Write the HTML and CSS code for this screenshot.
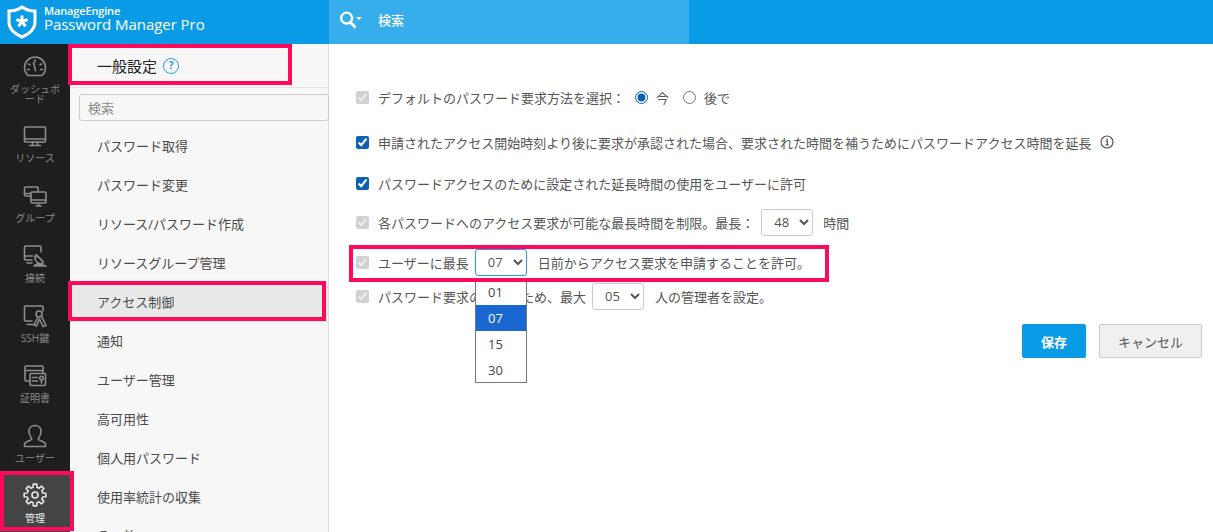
FILE: index.html
```html
<!DOCTYPE html>
<html lang="ja">
<head>
<meta charset="utf-8">
<title>一般設定</title>
<link rel="stylesheet" href="styles.css">
</head>
<body>
<header class="topbar">
  <div class="brand">
    <svg class="brand-logo" viewBox="0 0 30 34" width="30" height="34" aria-hidden="true">
      <path d="M15 2 C19 5 24 6 28 6 V17 C28 24 22 29 15 32 C8 29 2 24 2 17 V6 C6 6 11 5 15 2 Z" fill="none" stroke="#fff" stroke-width="3"/>
      <path d="M15 16.500 V10.500 M15 16.500 L20.700 14.600 M15 16.500 L18.500 21.400 M15 16.500 L11.500 21.400 M15 16.500 L9.300 14.600" fill="none" stroke="#fff" stroke-width="3"/>
    </svg>
    <div class="brand-text">
      <span class="brand-vendor">ManageEngine</span>
      <span class="brand-product">Password Manager Pro</span>
    </div>
  </div>
  <div class="topsearch">
    <svg class="topsearch-icon" viewBox="0 0 22 16.500" width="24" height="18" aria-hidden="true">
      <circle cx="7" cy="6.500" r="5" fill="none" stroke="#fff" stroke-width="2.200"/>
      <path d="M10.500 10.500 L14.500 14.500" stroke="#fff" stroke-width="2.600" stroke-linecap="round"/>
      <path d="M15.500 5.500 h5.500 l-2.750 2.800 Z" fill="#fff"/>
    </svg>
    <span class="topsearch-label">検索</span>
  </div>
</header>
<div class="main">
  <nav class="rail">
    <a class="rail-item rail-item-tall">
      <svg viewBox="0 0 24 24" width="24" height="24" aria-hidden="true"><g class="ico"><path d="M5 20.500 C2.800 18.500 1.500 15.600 1.500 12.500 A10.500 10.500 0 0 1 22.500 12.500 C22.500 15.600 21.200 18.500 19 20.500 Z"/><path d="M12 5 v1.500 M5.500 9 l1.400 .8 M18.500 9 l-1.400 .8 M4.500 14.500 h1.800 M17.700 14.500 h1.800"/><path d="M10.500 7.500 L12.500 15.500"/></g></svg>
      <span>ダッシュボード</span>
    </a>
    <a class="rail-item">
      <svg viewBox="0 0 24 24" width="24" height="24" aria-hidden="true"><g class="ico"><rect x="1.500" y="3" width="21" height="15" rx="1"/><path d="M1.500 15 h21 M9.500 18 v3 M14.500 18 v3 M6.500 21.500 h11"/></g></svg>
      <span>リソース</span>
    </a>
    <a class="rail-item">
      <svg viewBox="0 0 24 24" width="24" height="24" aria-hidden="true"><g class="ico"><path d="M7 12 H2.500 a1 1 0 0 1-1-1 V4 a1 1 0 0 1 1-1 H14 a1 1 0 0 1 1 1 V7"/><rect x="8" y="8" width="15" height="11" rx="1"/><path d="M8 16 h15 M13 22 h5 M15.500 19 v3 M1.500 9.500 h6"/></g></svg>
      <span>グループ</span>
    </a>
    <a class="rail-item">
      <svg viewBox="0 0 24 24" width="24" height="24" aria-hidden="true"><g class="ico"><path d="M9 16 H2.500 a1 1 0 0 1-1-1 V3 a1 1 0 0 1 1-1 H17 a1 1 0 0 1 1 1 V8"/><path d="M1.500 12 h8 M4 19 h5"/><path d="M12 12 a7 7 0 0 0 8 8 A9 9 0 0 0 12 12 Z M13 10.500 l7 7 M14 20 L23 22 H11 Z"/></g></svg>
      <span>接続</span>
    </a>
    <a class="rail-item">
      <svg viewBox="0 0 24 24" width="24" height="24" aria-hidden="true"><g class="ico"><path d="M9 17 H2.500 a1 1 0 0 1-1-1 V3 a1 1 0 0 1 1-1 H19 a1 1 0 0 1 1 1 V7 M4 20.500 h6"/><circle cx="16" cy="10" r="3"/><path d="M15 13 L11 21 L13.500 22 L16.500 15 L20 22.500 L23 21.500 L18.500 12"/></g></svg>
      <span>SSH鍵</span>
    </a>
    <a class="rail-item">
      <svg viewBox="0 0 24 24" width="24" height="24" aria-hidden="true"><g class="ico"><path d="M6 17 H3 a1 1 0 0 1-1-1 V3 a1 1 0 0 1 1-1 H19 a1 1 0 0 1 1 1 V9 M2 6.500 h18"/><rect x="7" y="9.500" width="15.500" height="12" rx="1"/><path d="M9.500 13.500 h5 M9.500 17 h5"/><circle cx="18.500" cy="14" r="1.800"/><path d="M18.500 16 v3"/></g></svg>
      <span>証明書</span>
    </a>
    <a class="rail-item">
      <svg viewBox="0 0 24 24" width="24" height="24" aria-hidden="true"><g class="ico"><path d="M8.500 14 C6.500 12 6 9.500 6 7.500 C6 4 8.500 1.500 12 1.500 C15.500 1.500 18 4 18 7.500 C18 9.500 17.500 12 15.500 14 L15.500 15.500 C17 17 22 17.500 22.500 20 V22.500 H1.500 V20 C2 17.500 7 17 8.500 15.500 Z"/></g></svg>
      <span>ユーザー</span>
    </a>
    <a class="rail-item rail-item-active">
      <svg viewBox="0 0 24 24" width="24" height="24" aria-hidden="true"><g class="ico ico-active"><path d="M10.060 4.240 L10.280 1.130 H13.720 L13.940 4.240 L16.120 5.140 L18.470 3.100 L20.900 5.530 L18.860 7.880 L19.760 10.060 L22.870 10.280 V13.720 L19.760 13.940 L18.860 16.120 L20.900 18.470 L18.470 20.900 L16.120 18.860 L13.940 19.760 L13.720 22.870 H10.280 L10.060 19.760 L7.880 18.860 L5.530 20.900 L3.100 18.470 L5.140 16.120 L4.240 13.940 L1.130 13.720 V10.280 L4.240 10.060 L5.140 7.880 L3.100 5.530 L5.530 3.100 L7.880 5.140 Z"/><circle cx="12" cy="12" r="3"/></g></svg>
      <span>管理</span>
    </a>
  </nav>

  <aside class="side">
    <div class="side-head">
      <h1 class="side-title">一般設定</h1>
      <span class="help">?</span>
    </div>
    <input class="side-search" type="text" placeholder="検索">
    <ul class="menu">
      <li>パスワード取得</li>
      <li>パスワード変更</li>
      <li>リソース/パスワード作成</li>
      <li>リソースグループ管理</li>
      <li class="menu-active">アクセス制御</li>
      <li>通知</li>
      <li>ユーザー管理</li>
      <li>高可用性</li>
      <li>個人用パスワード</li>
      <li>使用率統計の収集</li>
      <li>その他</li>
    </ul>
  </aside>

  <section class="content">
    <div class="row">
      <input type="checkbox" checked disabled>
      <span class="label">デフォルトのパスワード要求方法を選択：</span>
      <input class="radio radio-first" type="radio" name="when" checked>
      <span class="label">今</span>
      <input class="radio radio-next" type="radio" name="when">
      <span class="label">後で</span>
    </div>
    <div class="row row-gap15">
      <input type="checkbox" checked>
      <span class="label">申請されたアクセス開始時刻より後に要求が承認された場合、要求された時間を補うためにパスワードアクセス時間を延長</span>
      <svg class="info" viewBox="0 0 14 14" width="14" height="14" aria-hidden="true">
        <circle cx="7" cy="7" r="6" fill="none" stroke="#555" stroke-width="1.200"/>
        <path d="M5.800 6.200 h1.600 v3.300 M5.600 9.800 h3.000 M7 3.600 v1.300" fill="none" stroke="#555" stroke-width="1.300"/>
      </svg>
    </div>
    <div class="row row-gap11">
      <input type="checkbox" checked>
      <span class="label">パスワードアクセスのために設定された延長時間の使用をユーザーに許可</span>
    </div>
    <div class="row row-gap9">
      <input type="checkbox" checked disabled>
      <span class="label">各パスワードへのアクセス要求が可能な最長時間を制限。最長：</span>
      <select class="num num-a"><option>48</option></select>
      <span class="label">時間</span>
    </div>
    <div class="row row-gap10">
      <input type="checkbox" checked disabled>
      <span class="label">ユーザーに最長</span>
      <select class="num num-focus"><option>07</option></select>
      <span class="label">日前からアクセス要求を申請することを許可。</span>
    </div>
    <div class="row row-gap4">
      <input type="checkbox" checked disabled>
      <span class="label">パスワード要求の承認のため、最大</span>
      <select class="num"><option>05</option></select>
      <span class="label">人の管理者を設定。</span>
    </div>
    <div class="actions">
      <button class="btn btn-primary" type="button">保存</button>
      <button class="btn btn-plain" type="button">キャンセル</button>
    </div>
  </section>
</div>

<ul class="popup">
  <li class="popup-first">01</li>
  <li class="popup-selected">07</li>
  <li>15</li>
  <li class="popup-last">30</li>
</ul>

<div class="mark mark-title"></div>
<div class="mark mark-access"></div>
<div class="mark mark-admin"></div>
<div class="mark mark-row"></div>
</body>
</html>
```
FILE: styles.css
```css
* { box-sizing: border-box; }
html, body { margin: 0; height: 532px; overflow: hidden; }
body {
  font-family: "Open Sans", "Noto Sans CJK JP", sans-serif;
  font-size: 13px;
  color: #555;
  background: #fff;
  position: relative;
}

.topbar { height: 44px; background: #0a9be6; display: flex; }
.brand { width: 329px; display: flex; align-items: center; padding-left: 7px; color: #fff; }
.brand-logo { flex: none; }
.brand-text { display: flex; flex-direction: column; margin-left: 7px; margin-top: -8px; }
.brand-vendor { font-size: 11px; font-weight: 600; line-height: 12px; letter-spacing: -.15px; }
.brand-product { font-size: 15px; font-weight: 500; line-height: 15px; letter-spacing: -.05px; white-space: nowrap; }
.topsearch { width: 360px; background: #36aeeb; display: flex; align-items: center; padding: 0 0 5px 10px; color: #fff; }
.topsearch-label { margin-left: 15px; font-weight: 500; }

.main { display: flex; height: 488px; }

.rail { width: 70px; background: #1e1e1e; flex: none; display: flex; flex-direction: column; }
.rail-item { height: 60px; flex: none; display: flex; flex-direction: column; align-items: center; padding-top: 9px; color: #8b8b8b; font-size: 10px; line-height: 10px; text-align: center; }
.rail-item span { margin-top: 5px; padding: 0 6px; }
.rail-item-tall { height: 71px; padding-top: 11px; }
.rail-item-active { background: #444; color: #ededed; margin-top: -1px; height: 58px; }
.rail-item-active span { margin-top: 6px; }
.ico { fill: none; stroke: #8d8d8d; stroke-width: 1.600; stroke-linejoin: round; stroke-linecap: round; }
.ico-active { stroke: #e6e6e6; }

.side { width: 259px; flex: none; background: #f7f7f7; border-right: 1px solid #dcdcdc; position: relative; }
.side-head { height: 44px; display: flex; align-items: center; padding: 0 0 0 27px; border-bottom: 1px solid #e3e3e3; }
.side-title { margin: 0; font-size: 15px; font-weight: 400; color: #222; }
.help { width: 16px; height: 16px; margin-left: 6px; border: 1.500px solid #2a9de4; border-radius: 50%; color: #2a9de4; font-size: 10px; font-weight: 700; line-height: 13px; text-align: center; }
.side-search { display: block; width: 250px; height: 27px; margin: 6px 0 0 9px; padding: 0 8px; border: 1px solid #ccc; border-radius: 3px; background: #f7f7f7; font: inherit; }
.side-search::placeholder { color: #8a8a8a; }
.menu { list-style: none; margin: 6px 0 0; padding: 0; }
.menu li { height: 39px; padding-left: 27px; line-height: 39px; color: #4a4a4a; white-space: nowrap; }
.menu-active { background: #e9e9e9; }

.content { flex: 1; padding: 38px 11px 0 27px; min-width: 0; }
.row { display: flex; align-items: center; height: 30px; white-space: nowrap; }
.row-gap15 { margin-top: 15px; }
.row-gap11 { margin-top: 11px; }
.row-gap9 { margin-top: 9px; }
.row-gap10 { margin-top: 10px; }
.row-gap4 { margin-top: 4px; }
.row input[type="checkbox"] { width: 13px; height: 13px; margin: 0 9px 0 0; flex: none; accent-color: #0b62b5; }
.radio { width: 13px; height: 13px; margin: 0; flex: none; accent-color: #0b62b5; }
.radio-first { margin: 0 8px 0 10px; }
.radio-next { margin: 0 8px 0 14px; }
.info { margin-left: 9px; margin-top: -1px; }
.num { width: 52px; height: 27px; margin: 0 11px 0 6px; padding: 0 0 0 8px; border: 1px solid #ccc; border-radius: 3px; background-color: #fff; color: #555; font: inherit; }
.num-a { margin: 0 10px 0 7px; }
.num-focus { border-color: #1f9de6; }

.actions { display: flex; justify-content: flex-end; gap: 13px; margin-top: 13px; }
.btn { height: 34px; border-radius: 2px; font: inherit; padding: 0; }
.btn-primary { width: 64px; background: #0a9be6; border: 1px solid #0a9be6; color: #fff; font-weight: 600; }
.btn-plain { width: 103px; background: #f0f0f0; border: 1px solid #ccc; color: #555; }

.popup { position: absolute; left: 475px; top: 280px; width: 52px; margin: 0; padding: 0; list-style: none; background: #fff; border: 1px solid #767676; }
.popup li { height: 26px; padding-left: 12px; line-height: 26px; color: #444; }
.popup .popup-first { height: 24px; line-height: 23px; }
.popup .popup-last { height: 25px; }
.popup .popup-selected { background: #1a67d2; color: #fff; }

.mark { position: absolute; border: 4px solid #ff0a5a; pointer-events: none; }
.mark-title { left: 68px; top: 44px; width: 224px; height: 41px; }
.mark-access { left: 68px; top: 281px; width: 258px; height: 40px; }
.mark-admin { left: 0; top: 471px; width: 74px; height: 60px; }
.mark-row { left: 349px; top: 245px; width: 480px; height: 37px; }
```
